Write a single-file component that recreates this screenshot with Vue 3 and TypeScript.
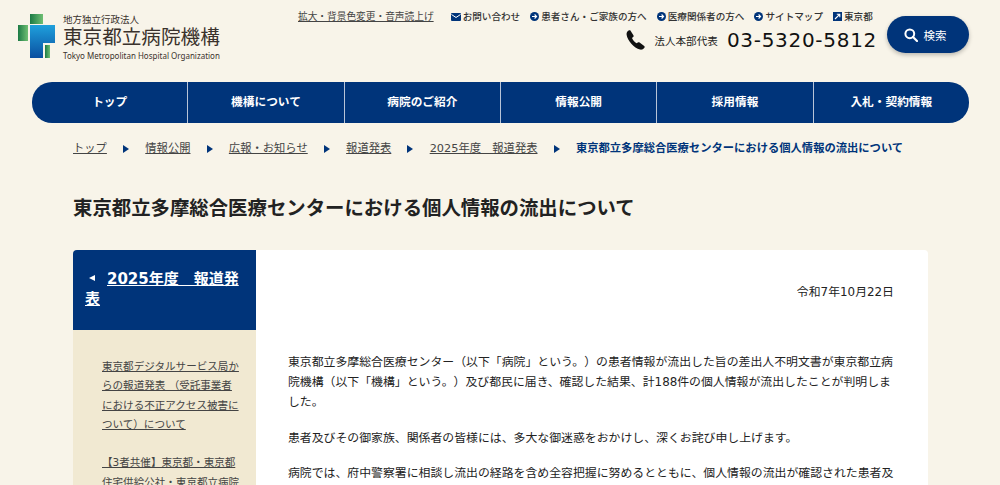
<template>
  <div class="page">
    <header class="site-header">
      <a class="logo" href="#">
        <svg class="logo-mark" width="38" height="46" viewBox="0 0 38 46">
          <defs>
            <linearGradient id="gBlue" x1="0" y1="0" x2="0" y2="1">
              <stop offset="0" stop-color="#1fa0dc" />
              <stop offset="1" stop-color="#0a4fa0" />
            </linearGradient>
            <linearGradient id="gGreen" x1="0" y1="0" x2="1" y2="0">
              <stop offset="0" stop-color="#1c7a45" />
              <stop offset="1" stop-color="#6fbf73" />
            </linearGradient>
          </defs>
          <rect x="12" y="0" width="13" height="10" fill="url(#gGreen)" />
          <rect x="0" y="11" width="10" height="16" fill="url(#gGreen)" />
          <path d="M12 11H37V29H25V44H12Z" fill="url(#gBlue)" />
          <rect x="27" y="31" width="5" height="13" fill="url(#gGreen)" />
        </svg>
        <span class="logo-text">
          <span class="logo-sub">地方独立行政法人</span>
          <span class="logo-name">東京都立病院機構</span>
          <span class="logo-en">Tokyo Metropolitan Hospital Organization</span>
        </span>
      </a>

      <div class="header-right">
        <div class="util-row">
          <a class="util-access" href="#">拡大・背景色変更・音声読上げ</a>
          <a v-for="l in utilLinks" :key="l.label" class="util-link" href="#">
            <svg v-if="l.icon === 'mail'" width="10" height="8" viewBox="0 0 10 8">
              <rect width="10" height="8" rx="1" fill="#00347a" />
              <path d="M0.5 1.5L5 4.5L9.5 1.5" fill="none" stroke="#fff" stroke-width="1" />
            </svg>
            <svg v-else-if="l.icon === 'arrow'" width="9" height="9" viewBox="0 0 9 9">
              <circle cx="4.5" cy="4.5" r="4.5" fill="#00347a" />
              <path d="M2 4.5H6.4M4.6 2.5L6.6 4.5L4.6 6.5" fill="none" stroke="#fff" stroke-width="1.1" />
            </svg>
            <svg v-else width="9" height="9" viewBox="0 0 9 9">
              <rect width="9" height="9" fill="#00347a" />
              <path d="M2 7L6.2 2.8M3.8 2.2H6.8V5.2" fill="none" stroke="#fff" stroke-width="1.1" />
            </svg>
            {{ l.label }}
          </a>
        </div>
        <div class="tel-row">
          <svg class="tel-icon" width="19" height="20" viewBox="0 0 19 20">
            <path d="M4.4 0.4L7.4 5.2C7.8 5.9 7.7 6.6 7.1 7.1L6 8C6.8 10 8.6 12.2 10.6 13.2L11.8 12.4C12.4 12 13.1 12.1 13.6 12.5L18.2 16C18.8 16.5 18.9 17.2 18.4 17.8C17.3 19.3 15.7 20 14 19.6C8 18.2 1.4 10.2 0.6 4.8C0.4 3 1.1 1.6 2.6 0.6C3.3 0.1 4 0 4.4 0.4Z" fill="#111" />
          </svg>
          <span class="tel-label">法人本部代表</span>
          <span class="tel-number">03-5320-5812</span>
        </div>
      </div>

      <button class="search-btn" type="button">
        <svg width="14" height="14" viewBox="0 0 14 14">
          <circle cx="5.8" cy="5.8" r="4.4" fill="none" stroke="#fff" stroke-width="2" />
          <path d="M9 9L13 13" stroke="#fff" stroke-width="2.2" stroke-linecap="round" />
        </svg>
        検索
      </button>
    </header>

    <nav class="gnav">
      <a v-for="n in navItems" :key="n" class="gnav-item" href="#">{{ n }}</a>
    </nav>

    <ol class="breadcrumb">
      <template v-for="c in crumbs" :key="c">
        <li><a href="#">{{ c }}</a></li>
        <li class="crumb-sep"></li>
      </template>
      <li class="crumb-current">{{ title }}</li>
    </ol>

    <h1 class="page-title">{{ title }}</h1>

    <div class="content">
      <aside class="side">
        <h2 class="side-head"><span class="side-arrow"></span><a href="#">2025年度　報道発表</a></h2>
        <ul class="side-list">
          <li v-for="s in sideLinks" :key="s"><a href="#">{{ s }}</a></li>
        </ul>
      </aside>
      <main class="article">
        <p class="date">令和7年10月22日</p>
        <p v-for="(p, i) in paragraphs" :key="i" class="para">{{ p }}</p>
      </main>
    </div>
  </div>
</template>

<script setup lang="ts">
const title = '東京都立多摩総合医療センターにおける個人情報の流出について'

const utilLinks = [
  { label: 'お問い合わせ', icon: 'mail' },
  { label: '患者さん・ご家族の方へ', icon: 'arrow' },
  { label: '医療関係者の方へ', icon: 'arrow' },
  { label: 'サイトマップ', icon: 'arrow' },
  { label: '東京都', icon: 'ext' },
]

const navItems = ['トップ', '機構について', '病院のご紹介', '情報公開', '採用情報', '入札・契約情報']

const crumbs = ['トップ', '情報公開', '広報・お知らせ', '報道発表', '2025年度　報道発表']

const sideLinks = [
  '東京都デジタルサービス局からの報道発表 （受託事業者における不正アクセス被害について）について',
  '【3者共催】東京都・東京都住宅供給公社・東京都立病院機構',
]

const paragraphs = [
  '東京都立多摩総合医療センター（以下「病院」という。）の患者情報が流出した旨の差出人不明文書が東京都立病院機構（以下「機構」という。）及び都民に届き、確認した結果、計188件の個人情報が流出したことが判明しました。',
  '患者及びその御家族、関係者の皆様には、多大な御迷惑をおかけし、深くお詫び申し上げます。',
  '病院では、府中警察署に相談し流出の経路を含め全容把握に努めるとともに、個人情報の流出が確認された患者及び関係者の皆様に対し、順次御連絡しております。',
]
</script>

<style>
html, body {
  overflow: hidden;
}
body {
  background: #f8f4e9;
}
</style>

<style scoped>
.page {
  height: 485px;
  overflow: hidden;
  color: #222;
  font-family: "DejaVu Sans", "Noto Sans CJK JP", sans-serif;
  text-spacing-trim: space-all;
}
a {
  color: inherit;
}

.site-header {
  display: flex;
  align-items: flex-start;
  height: 82px;
  padding: 0 31px 0 18px;
  box-sizing: border-box;
}
.logo {
  display: flex;
  gap: 7px;
  padding-top: 14px;
  text-decoration: none;
  width: 279px;
  flex: none;
}
.logo-mark {
  flex: none;
}
.logo-text {
  display: flex;
  flex-direction: column;
  color: #3a322c;
}
.logo-sub {
  font-size: 9.5px;
  line-height: 12px;
}
.logo-name {
  font-size: 19.6px;
  line-height: 24px;
  white-space: nowrap;
}
.logo-en {
  font-family: "Noto Sans", sans-serif;
  font-size: 8px;
  line-height: 11px;
  white-space: nowrap;
}

.header-right {
  flex: 1;
  min-width: 0;
  padding-top: 10px;
}
.util-row {
  display: flex;
  align-items: center;
  font-size: 9.6px;
  line-height: 13px;
  white-space: nowrap;
}
.util-access {
  color: #444;
  font-size: 9.7px;
  margin-left: 1px;
  margin-right: 17px;
}
.util-link {
  display: flex;
  align-items: center;
  gap: 2px;
  margin-right: 10px;
  color: #333;
  font-weight: 500;
  text-decoration: none;
}
.tel-row {
  display: flex;
  align-items: center;
  justify-content: flex-end;
  margin-top: 5px;
  padding-right: 10px;
}
.tel-icon {
  margin-right: 9px;
}
.tel-label {
  font-size: 10.6px;
  margin-right: 9px;
}
.tel-number {
  font-size: 20px;
  letter-spacing: .7px;
  color: #111;
}

.search-btn {
  flex: none;
  display: flex;
  align-items: center;
  justify-content: center;
  gap: 6px;
  width: 82px;
  height: 37px;
  margin-top: 16px;
  padding: 0 6px 0 0;
  border: 0;
  border-radius: 19px;
  background: #00347a;
  color: #fff;
  font-family: inherit;
  font-size: 11.5px;
  box-shadow: 0 2px 4px rgba(0, 0, 0, .25);
}

.gnav {
  display: flex;
  height: 41px;
  margin: 0 31px 0 32px;
  border-radius: 20px;
  background: #00347a;
  overflow: hidden;
}
.gnav-item {
  flex: 1;
  display: flex;
  align-items: center;
  justify-content: center;
  padding-bottom: 4px;
  box-sizing: border-box;
  color: #fff;
  font-size: 11.7px;
  font-weight: 700;
  text-decoration: none;
  border-left: 1px solid #b8c4d8;
}
.gnav-item:first-child {
  border-left: 0;
}

.breadcrumb {
  display: flex;
  align-items: center;
  gap: 16.2px;
  margin: 0;
  padding: 19px 0 0 73px;
  list-style: none;
  font-size: 11.3px;
  line-height: 14px;
  white-space: nowrap;
  color: #444;
}
.crumb-sep {
  width: 0;
  height: 0;
  border-left: 6px solid #00347a;
  border-top: 4px solid transparent;
  border-bottom: 4px solid transparent;
}
.crumb-current {
  color: #00347a;
  font-weight: 700;
}

.page-title {
  margin: 40px 0 0 73px;
  font-size: 19.4px;
  line-height: 26px;
  color: #222;
}

.content {
  display: flex;
  margin: 28px 72px 0 73px;
  border-radius: 4px 4px 0 0;
  overflow: hidden;
  background: #fff;
}
.side {
  flex: none;
  width: 183px;
  background: #f1e9d2;
}
.side-head {
  height: 80px;
  box-sizing: border-box;
  margin: 0;
  padding: 19px 12px 0;
  background: #00347a;
  color: #fff;
  font-size: 15px;
  line-height: 20px;
}
.side-arrow {
  display: inline-block;
  width: 0;
  height: 0;
  margin: 0 12px 3px 4px;
  border-right: 6px solid #fff;
  border-top: 3.5px solid transparent;
  border-bottom: 3.5px solid transparent;
}
.side-list {
  margin: 0;
  padding: 27px 16px 0 29px;
  list-style: none;
  font-size: 10.55px;
  line-height: 19.33px;
}
.side-list li {
  margin-bottom: 19px;
  color: #444;
}

.article {
  flex: 1;
  padding: 32px 34px 0 32px;
  font-size: 11.88px;
  line-height: 20px;
}
.date {
  margin: 0 0 50px;
  text-align: right;
}
.para {
  margin: 0 0 15.5px;
}
</style>
